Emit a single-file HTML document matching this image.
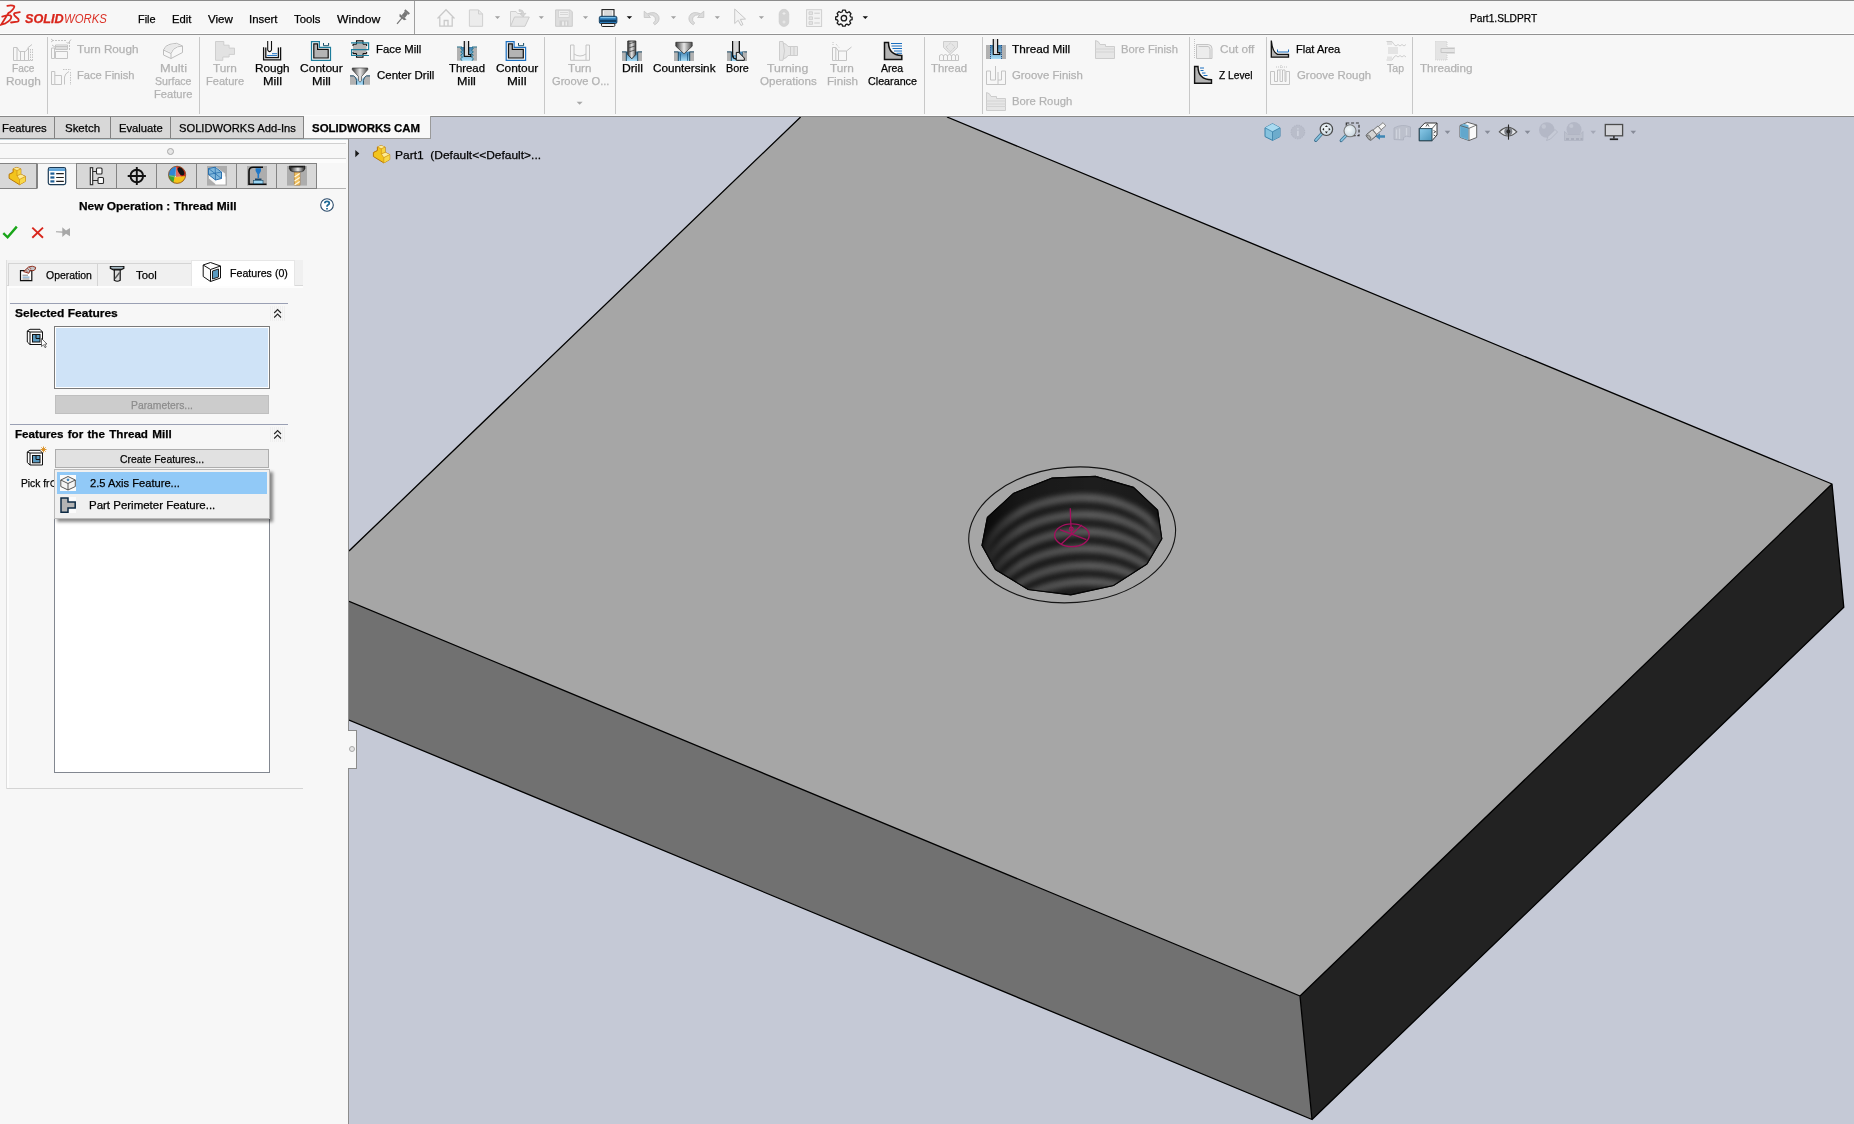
<!DOCTYPE html>
<html lang="en"><head><meta charset="utf-8"><title>SOLIDWORKS CAM - Part1.SLDPRT</title>
<style>
html,body{margin:0;padding:0;}
body{width:1854px;height:1124px;overflow:hidden;position:relative;background:#f7f7f7;font-family:"Liberation Sans",sans-serif;font-size:12px;}
.a{position:absolute;}
.t{position:absolute;white-space:pre;line-height:1;transform-origin:0 0;display:inline-block;-webkit-text-stroke:0.25px currentColor;}
svg{position:absolute;overflow:visible;}
#menubar{left:0;top:0;width:1854px;height:34px;background:#f7f7f7;border-top:1px solid #8c8c8c;box-sizing:border-box;}
#menuline{left:0;top:33px;width:1854px;height:1px;background:#929292;border-top:1px solid #fdfdfd;border-bottom:1px solid #fdfdfd;}
#menusep{left:414px;top:1px;width:1px;height:33px;background:#a0a0a0;}
#ribbon{left:0;top:35px;width:1854px;height:81px;background:#f7f7f7;}
.rsep{position:absolute;top:37px;width:1px;height:77px;background:#c8c8c8;}
#ribbonline{left:0;top:115px;width:1854px;height:1px;background:#888888;border-top:1px solid #fdfdfd;}
#tabrow{left:0;top:117px;width:304px;height:21px;background:#d8d8d8;border-bottom:1px solid #858585;}
.tab{position:absolute;top:117px;height:21px;border-right:1px solid #828282;box-sizing:border-box;}
#tabactive{left:304px;top:116px;width:127px;height:23px;background:#f8f8f8;box-sizing:border-box;border-right:1px solid #9a9a9a;border-bottom:1px solid #9a9a9a;}
#viewport{left:349px;top:117px;width:1505px;height:1007px;background:#c5c9d6;}
#vpleft{left:348px;top:139px;width:1px;height:985px;background:#8c8c8c;}
#panel{left:0;top:139px;width:348px;height:985px;background:#f7f7f7;}
.hl{position:absolute;height:1px;background:#d0d0d0;}
.itab{position:absolute;top:163px;height:26px;box-sizing:border-box;border:1px solid #838383;background:#d8d8d8;}
.itab.act{background:#f7f7f7;border-bottom-color:#f7f7f7;top:163px;height:26px;border-color:#b4b4b4 #838383 #f7f7f7 #838383;}
.stab{position:absolute;top:263px;height:23px;box-sizing:border-box;border:1px solid #d4d4d4;border-bottom:none;background:#f0f0f0;}
.stab.act{top:260px;height:26px;background:#ffffff;border-color:#e6e6e6;}
.secline{height:1px;background:#9aa0b4;}
.chevbg{width:15px;height:15px;background:repeating-linear-gradient(90deg,#efefef 0 1px,#f7f7f7 1px 2px);}

</style></head>
<body>
<div class="a" id="menubar"></div>
<div class="a" id="menuline"></div>
<div class="a" id="menusep"></div>
<div class="a" id="ribbon"></div>
<div class="rsep" style="left:47px"></div><div class="rsep" style="left:199px"></div>
<div class="rsep" style="left:544px"></div><div class="rsep" style="left:615px"></div>
<div class="rsep" style="left:924px"></div><div class="rsep" style="left:982px"></div>
<div class="rsep" style="left:1189px"></div><div class="rsep" style="left:1266px"></div>
<div class="rsep" style="left:1412px"></div>
<div class="a" id="viewport"></div>
<div class="a" id="ribbonline"></div>
<div class="a" id="panel"></div>
<div class="a" id="tabrow"></div>
<div class="tab" style="left:0;width:55px"></div><div class="tab" style="left:55px;width:56px"></div>
<div class="tab" style="left:111px;width:60px"></div><div class="tab" style="left:171px;width:133px"></div>
<div class="a" id="tabactive"></div>
<div class="a" id="vpleft"></div>
<!-- panel header lines -->
<div class="a" style="left:0;top:139px;width:348px;height:4px;background:#fcfcfc"></div><div class="a" style="left:0;top:139px;width:348px;height:1px;background:#c4d4da"></div><div class="a" style="left:0;top:159px;width:346px;height:4px;background:#fcfcfc"></div>
<div class="hl" style="left:0;top:143px;width:346px"></div>
<div class="hl" style="left:0;top:158px;width:346px"></div>
<div class="a" style="left:167px;top:148px;width:5px;height:5px;border:1px solid #a8a8a8;border-radius:50%;background:#e6e6e6"></div>
<!-- icon tab strip -->
<div class="a" style="left:0;top:188px;width:346px;height:1px;background:#b4b4b4"></div>
<div class="itab" style="left:-1px;width:38px"></div>
<div class="itab act" style="left:37px;width:40px"></div>
<div class="itab" style="left:76px;width:41px"></div>
<div class="itab" style="left:116px;width:41px"></div>
<div class="itab" style="left:156px;width:41px"></div>
<div class="itab" style="left:196px;width:41px"></div>
<div class="itab" style="left:236px;width:41px"></div>
<div class="itab" style="left:276px;width:41px"></div>
<!-- sub tabs -->
<div class="a" style="left:7px;top:260px;width:296px;height:26px;background:#f0f0f0"></div>
<div class="a" style="left:6px;top:260px;width:1px;height:529px;background:#dedede"></div>
<div class="a" style="left:7px;top:286px;width:2px;height:502px;background:#fdfdfd"></div>
<div class="a" style="left:7px;top:286px;width:296px;height:2px;background:#fdfdfd"></div>
<div class="a" style="left:7px;top:285px;width:296px;height:1px;background:#d9d9d9"></div>
<div class="stab" style="left:8px;width:90px"></div>
<div class="stab" style="left:97px;width:95px"></div>
<div class="stab act" style="left:191px;width:104px"></div>
<div class="a" style="left:295px;top:260px;width:8px;height:25px;background:#f0f0f0"></div>
<!-- Selected features -->
<div class="a secline" style="left:10px;top:303px;width:278px"></div>
<div class="a chevbg" style="left:270px;top:306px"></div>
<div class="a" style="left:54px;top:326px;width:216px;height:63px;box-sizing:border-box;border:1px solid #7a7a7a;background:#fff;"><div style="position:absolute;left:1px;top:1px;right:1px;bottom:1px;background:#cfe3f7"></div></div>
<div class="a" style="left:55px;top:395px;width:214px;height:19px;background:#cccccc;box-sizing:border-box;border:1px solid #bfbfbf"></div>
<!-- Features for the thread mill -->
<div class="a secline" style="left:10px;top:424px;width:278px"></div>
<div class="a chevbg" style="left:270px;top:427px"></div>
<div class="a" style="left:55px;top:449px;width:214px;height:19px;background:#e1e1e1;box-sizing:border-box;border:1px solid #adadad"></div>
<div class="a" style="left:54px;top:490px;width:216px;height:283px;box-sizing:border-box;border:1px solid #828790;background:#fff"></div>
<div class="a" id="popup" style="left:54px;top:469px;width:216px;height:50px;box-sizing:border-box;border:1px solid #b9b9b9;background:#f0f0f0;box-shadow:3px 3px 3px rgba(0,0,0,0.45)"></div>
<div class="a" style="left:57px;top:472px;width:210px;height:22px;background:#91c9f7"></div>
<div class="a" style="left:60px;top:475px;width:16px;height:16px;background:#fbfbfb"></div>
<div class="a" style="left:60px;top:497px;width:16px;height:16px;background:#fbfbfb"></div>
<div class="a" style="left:7px;top:788px;width:296px;height:1px;background:#d4d4d4"></div>
<!-- splitter handle -->
<div class="a" style="left:348px;top:730px;width:9px;height:39px;box-sizing:border-box;background:#f7f7f7;border:1px solid #8c8c8c;border-left:none"></div>
<div class="a" style="left:349px;top:746px;width:4px;height:4px;border:1px solid #a8a8a8;border-radius:50%;background:#e6e6e6"></div>

<svg id="model" class="a" style="left:0;top:0" width="1854" height="1124" viewBox="0 0 1854 1124">
<defs>
<clipPath id="vpclip"><rect x="349" y="117" width="1505" height="1007"/></clipPath>
<clipPath id="holeclip"><polygon points="1052.1,478 1095.5,476.3 1133.5,487.4 1157.6,510.1 1161.8,538.8 1146.9,564.1 1113.5,585.5 1070.8,594.8 1028.1,589.5 995.4,569.5 982,545.4 987.4,517.4 1013.4,493.4"/></clipPath>
<filter id="blur2" x="-20%" y="-20%" width="140%" height="140%"><feGaussianBlur stdDeviation="2.4"/></filter>
<linearGradient id="holeshade" x1="0" y1="0" x2="1" y2="0"><stop offset="0" stop-color="#000" stop-opacity="0.7"/><stop offset="0.22" stop-color="#000" stop-opacity="0.2"/><stop offset="0.6" stop-color="#000" stop-opacity="0"/><stop offset="0.92" stop-color="#000" stop-opacity="0.1"/><stop offset="1" stop-color="#000" stop-opacity="0.5"/></linearGradient>
</defs>
<g clip-path="url(#vpclip)" stroke="#000" stroke-width="1.3" stroke-linejoin="round">
<polygon points="800.4,117 947,117 1832,484 1300,996 349,601.3 349,551" fill="#a6a6a6" stroke="none"/>
<polygon points="349,601.3 1300,996 1312,1119.5 349,720" fill="#717171" stroke="none"/>
<polygon points="1300,996 1832,484 1843.8,607.3 1312,1119.5" fill="#222222" stroke="none"/>
<path d="M800.6,117 L349,551 M947,117 L1832,484 L1300,996 L349,601.3 M1832,484 L1843.8,607.3 L1312,1119.5 L349,720 M1300,996 L1312,1119.5" fill="none"/>
</g>
<!-- threaded hole -->
<ellipse cx="1072.15" cy="534.85" rx="103.6" ry="67.7" transform="rotate(-4.25 1072.15 534.85)" fill="none" stroke="#141414" stroke-width="1.1"/>
<polygon points="1052.1,478 1095.5,476.3 1133.5,487.4 1157.6,510.1 1161.8,538.8 1146.9,564.1 1113.5,585.5 1070.8,594.8 1028.1,589.5 995.4,569.5 982,545.4 987.4,517.4 1013.4,493.4" fill="#1d1d1d" stroke="#000" stroke-width="1"/>
<g clip-path="url(#holeclip)">
<g filter="url(#blur2)" fill="none" stroke="#5c5c5c" stroke-width="8">
<ellipse cx="1074" cy="559" rx="92" ry="61" transform="rotate(-6 1074 559)"/>
<ellipse cx="1075" cy="576" rx="92" ry="61" transform="rotate(-6 1075 576)"/>
<ellipse cx="1076" cy="593" rx="92" ry="61" transform="rotate(-6 1076 593)"/>
<ellipse cx="1077" cy="610" rx="92" ry="61" transform="rotate(-6 1077 610)"/>
<ellipse cx="1078" cy="627" rx="92" ry="61" transform="rotate(-6 1078 627)"/>
<ellipse cx="1079" cy="643" rx="92" ry="61" transform="rotate(-6 1079 643)"/>
</g>
<rect x="980" y="470" width="184" height="130" fill="url(#holeshade)"/>
</g>
<polygon points="1052.1,478 1095.5,476.3 1133.5,487.4 1157.6,510.1 1161.8,538.8 1146.9,564.1 1113.5,585.5 1070.8,594.8 1028.1,589.5 995.4,569.5 982,545.4 987.4,517.4 1013.4,493.4" fill="none" stroke="#050505" stroke-width="1.2"/>
<!-- origin marker -->
<g fill="none" stroke="#a3105e" stroke-width="1.3">
<ellipse cx="1071.9" cy="535.3" rx="17.3" ry="11.4"/>
<path d="M1070.3,508.2 L1070.6,520 L1071.6,535 M1059.8,529.6 L1086.4,539.6 M1081.8,524.9 L1061,544.2"/>
<circle cx="1071.3" cy="529" r="1.8"/>
</g>
</svg>

<svg id="icons" class="a" style="left:0;top:0" width="1854" height="1124" viewBox="0 0 1854 1124">
<defs>
<linearGradient id="silver" x1="0" y1="0" x2="1" y2="0"><stop offset="0" stop-color="#5a5a5a"/><stop offset="0.45" stop-color="#f2f2f2"/><stop offset="1" stop-color="#6a6a6a"/></linearGradient>
<linearGradient id="silver2" x1="0" y1="0" x2="1" y2="0"><stop offset="0" stop-color="#3c3c3c"/><stop offset="0.5" stop-color="#e8e8e8"/><stop offset="1" stop-color="#4a4a4a"/></linearGradient>
<linearGradient id="bluev" x1="0" y1="0" x2="0" y2="1"><stop offset="0" stop-color="#3c7fb0"/><stop offset="1" stop-color="#a9ddf6"/></linearGradient>
<g id="blocks"><!-- two grey blocks with blue pocket, local 0..20 x, 10.6..20 y -->
<rect x="4" y="10.6" width="12" height="9.4" fill="url(#bluev)"/>
<rect x="0" y="10.6" width="4.3" height="9.4" fill="#b2b2b2"/><rect x="15.7" y="10.6" width="4.3" height="9.4" fill="#b2b2b2"/>
<path d="M0,10.9 H4.3 V20 M20,10.9 H15.7 V20" fill="none" stroke="#1c4a66" stroke-width="1"/>
</g>
</defs>
<!-- ===== disabled ribbon icons ===== -->
<g fill="none" stroke="#c4c4c4" stroke-width="1">
<!-- Face Rough -->
<path d="M13.5,47.5 h3.5 v13 h-3.5 z M17,47.5 L19.5,51.5 H25.5 L28.5,48 V60.5 H17 M20.5,51.5 V60.5 M24.5,51.5 V60.5 M27.5,48 L32,44.5"/>
<path d="M30.5,49 V60.5 M32.5,49 V60.5 M28.5,60.5 H33" stroke-dasharray="1.5 1"/>
<!-- Turn Rough -->
<path d="M52,40.5 H67 M69.5,42 V51" stroke-dasharray="2 1"/>
<path d="M51,39 L53,40.5 L51,42 M66.5,42 L68,43.5 L71,39.5 M51.5,48 h3 v10.5 h-3 z M55.5,45 H67.5 V49.5 H55.5 z M55.5,46.5 H67.5 M55.5,48 H67.5 M55.5,51.5 H67.5 V58.5 H55.5 z M52,45 L55.5,47.5"/>
<!-- Face Finish -->
<path d="M51.5,71.5 h3.3 v13 h-3.3 z M54.8,75.5 H61.5 V84.5 H54.8 M64.5,84.5 V77 Q65,73.5 69,71.5"/>
<path d="M63,69.5 H71 M70.5,72 V85" stroke-dasharray="1.5 1"/>
<!-- Multi Surface Feature -->
<path d="M163.5,50 L171,53.5 V58.5 L163.5,55 z M163.5,50 Q165,45.5 170,44.3 L176.5,43.3 L182.5,46 V52.5 L171,58.5 M171,53.5 Q172.5,48.5 177.5,46.8 L182.5,46" stroke="#bdbdbd"/>
<path d="M164.5,49.5 Q166,46 170.2,45 L176.3,44 L181,46 L177.3,46.3 Q172.5,48 171,52.5 z" fill="#e9e9e9" stroke="none"/>
<!-- Turn Feature -->
<path d="M215.5,41.5 H223.8 V45.2 H229.1 V48.1 H234.5 V54.4 H229.1 V57 H222.8 V60.3 H215.5 z" fill="#e2e2e2" stroke="#cfcfcf"/>
<!-- Turn Groove -->
<path d="M570.5,45 H574 V54 Q580,58 586,54 V45 H589.5 V60.3 H570.5 z M574,54 V60 M586,54 V60" />
<!-- Turning Operations -->
<path d="M779.5,41.5 H783 Q786,51 783,60.3 H779.5 z M783,43 Q787,44 788,46.5 H797.5 V55.5 H788 Q787,58 783,59 M790.5,46.5 V55.5 M794,46.5 V55.5" fill="#e6e6e6" stroke="#cdcdcd"/>
<!-- Turn Finish -->
<path d="M832.5,47.5 h3.3 v13 h-3.3 z M835.8,47.5 L838.5,51 H846.5 V60.5 H835.8 M838.5,51 V60.5 M846.5,51 L851.5,47"/>
<path d="M833,42 V46 M836,44 L839,47.5" stroke-dasharray="1 1"/>
<!-- Thread -->
<path d="M943.5,41.5 H957.5 V47.5 L950.5,54 L943.5,47.5 z" fill="#e6e6e6" stroke="#cdcdcd"/>
<path d="M939.5,60.5 V55.5 Q941.5,53.5 943.5,55.5 Q945.5,53.5 947.5,55.5 Q949.5,53.5 951.5,55.5 Q953.5,53.5 955.5,55.5 Q957,53.5 958.5,55.5 V60.5 z M943.5,55.5 V60.5 M947.5,55.5 V60.5 M951.5,55.5 V60.5 M955.5,55.5 V60.5"/>
<path d="M946,47 L950.5,43 L955,47 L950.5,51.5 z" stroke-dasharray="1 1"/>
<!-- Groove Finish -->
<path d="M986.5,84.5 V71 H990.5 V80 H995.5 V66 M998,84.5 V72 M986.5,84.5 H1005.5 V71 H1001.5 V80 H998"/>
<!-- Bore Rough -->
<path d="M986.5,92.5 Q990,93 991,96.5 H996.5 V98.5 H1005.5 V110.5 H986.5 z" fill="#e6e6e6" stroke="#cdcdcd"/>
<path d="M986.5,101 H1005.5 M986.5,104 H1005.5 M986.5,106.5 H1005.5" stroke="#d4d4d4"/>
<!-- Bore Finish -->
<path d="M1095.5,40.5 Q1099,41 1100,44.5 H1105.500 V46.5 H1114.500 V58.5 H1095.5 z" fill="#e6e6e6" stroke="#cdcdcd"/>
<path d="M1095.5,49 H1114.5 M1095.5,52 H1114.5" stroke="#d4d4d4"/>
<!-- Cut off -->
<path d="M1194.5,39 V58" stroke-dasharray="1 1"/>
<path d="M1196.5,44.5 H1208.5 Q1212,45 1212,48.5 V58.5 H1196.5 z M1198.5,46.5 H1208 Q1210,47 1210,49.5 V58.5" fill="#ececec"/>
<!-- Groove Rough -->
<path d="M1270.500,84.5 V71.5 H1274.500 V81.5 H1277.500 V70 H1280 V81.5 H1282.500 V70 H1285 V81.500 H1286 V71.5 H1289.500 V84.5 z"/>
<path d="M1276,67 H1287 M1281,65 V70" stroke-dasharray="1 1"/>
<!-- Tap -->
<path d="M1386.500,41.500 H1392 L1394,44.5 L1396,46 L1398,44.5 L1400,46 L1402,44.5 L1404,46 L1406,44.5 M1386.500,60 H1392 L1394,57 L1396,55.500 L1398,57 L1400,55.500 L1402,57 L1404,55.500 L1406,57" stroke="#cfcfcf"/>
<path d="M1387,42 h5 v3 h-5 z M1387,56.5 h5 v3.500 h-5 z M1388,47 h10 v7 h-10z" fill="#e4e4e4" stroke="none"/>
<!-- Threading -->
<path d="M1435.500,41.500 H1447 V47.500 H1454.500 V53.500 H1447 V60 H1435.500 z" fill="#e4e4e4" stroke="#d0d0d0" stroke-dasharray="1 1"/>
<path d="M1441,48.500 H1454.500 M1441,52.500 H1454.500 M1441,48.500 V52.500" stroke="#c6c6c6"/>
</g>
<!-- ===== enabled ribbon icons ===== -->
<!-- Rough Mill -->
<g fill="none" stroke="#111" stroke-width="1.3">
<path d="M263.6,47.2 V59.9 H280.6 V47.2 M265.8,47.6 V57.7 H278.4 V47.6"/>
<path d="M267.7,41 V50 Q269.600,53.200 271.500,50 V41" stroke-width="1.100"/>
<path d="M272,53.700 H277.200 M267.200,55.600 H277.200" stroke="#1a6fc0" stroke-width="1"/>
</g>
<!-- Contour Mill (teal) -->
<g id="cm1">
<path d="M311.500,41.600 H319.400 V47.300 H330.500 V60.300 H311.500 z" fill="#f7f7f7" stroke="#1d7d9c" stroke-width="1.200"/>
<path d="M313.800,43.900 H317.600 V49.300 H328.200 V58 H313.800 z" fill="#b4b4b4" stroke="#111" stroke-width="1.200"/>
<path d="M323.500,43 V45.700 H328.600 V43" fill="none" stroke="#1a4f66" stroke-width="1"/>
</g>
<!-- Contour Mill (blue) -->
<g>
<path d="M506.200,41.600 H514.100 V47.300 H525.600 V60.300 H506.200 z" fill="#f7f7f7" stroke="#1a6fc0" stroke-width="1.200"/>
<path d="M508.500,43.900 H512.300 V49.300 H523.300 V58 H508.500 z" fill="#b4b4b4" stroke="#111" stroke-width="1.200"/>
<path d="M518.500,43 V45.700 H523.600 V43" fill="none" stroke="#1a4f66" stroke-width="1"/>
</g>
<!-- Face Mill -->
<g>
<path d="M356.500,40.600 H363 V44.300 H366.600 V53.600 H363 V57.200 H356.500 V53.600 H353 V44.300 H356.500 z" fill="#b4b4b4" stroke="none"/>
<path d="M356.500,44.300 V40.800 H363 V44.300 M356.500,53.600 V57.200 H363 V53.600 M353,44.300 h3.500 M363,44.300 h3.600 M353,53.600 h3.500 M363,53.600 h3.600 M353,46 v-1.700 M366.600,46 v-1.700 M353,52 v1.600 M366.600,52 v1.600" fill="none" stroke="#111" stroke-width="1.100"/>
<path d="M351,42.900 H368.600 V49.600 H351.600 V55.500 H369" fill="none" stroke="#1d7d9c" stroke-width="1.200"/>
</g>
<!-- Center Drill -->
<g>
<path d="M350,75.500 H353.500 Q356,76.500 356.500,80 V84.700 H350 z M370,75.500 H366.500 Q364,76.500 363.500,80 V84.700 H370 z" fill="#b2b2b2"/>
<path d="M353.500,75.500 Q356,76.500 356.500,80 V84.700 H363.500 V80 Q364,76.500 366.500,75.500 L362,79 H358 z" fill="#9fd4f2"/>
<path d="M350,75.900 H353.500 Q356.200,77 356.600,80.500 V84.700 M370,75.900 H366.500 Q363.800,77 363.400,80.500 V84.700" fill="none" stroke="#1c4a66" stroke-width="1"/>
<path d="M352.300,68 H367.700 V69.800 L361.600,76.500 V80.500 L360,82.300 L358.400,80.500 V76.500 L352.300,69.800 z" fill="url(#silver2)" stroke="#2a2a2a" stroke-width="0.600"/>
</g>
<!-- Thread Mill (large) -->
<g id="tmill">
<rect x="461" y="47" width="12" height="13.800" fill="url(#bluev)"/>
<path d="M457,46.800 H462 L460.600,48.500 L462.600,50.200 L460.600,51.900 L462.600,53.600 L460.600,55.300 L462.600,57 L460.600,58.700 L462,60.800 H457 z M477,46.800 H472 L473.400,48.500 L471.400,50.200 L473.400,51.900 L471.400,53.600 L473.400,55.300 L471.400,57 L473.400,58.700 L472,60.800 H477 z" fill="#b2b2b2"/>
<path d="M457,47 H462 L460.600,48.500 L462.600,50.200 L460.600,51.900 L462.600,53.600 L460.600,55.300 L462.600,57 L460.600,58.700 L462,60.800 M477,47 H472 L473.400,48.500 L471.400,50.200 L473.400,51.900 L471.400,53.600 L473.400,55.300 L471.400,57 L473.400,58.700 L472,60.800" fill="none" stroke="#1d6f8c" stroke-width="0.900"/>
<path d="M464.300,41 V56.300 H470.800 V54.500 H468.600 V41" fill="#dcdcdc" stroke="#111" stroke-width="1.200"/>
</g>
<!-- Drill -->
<g><use href="#blocks" x="622" y="41"/>
<path d="M627.800,41 H635.800 V54.500 L631.800,58.800 L627.800,54.500 z" fill="url(#silver2)" stroke="#222" stroke-width="0.900"/>
<path d="M628.500,44 L635,42 M628.500,48 L635,46 M628.500,52 L635,50" stroke="#444" stroke-width="0.800" fill="none"/>
</g>
<!-- Countersink -->
<g><use href="#blocks" x="674" y="41"/>
<path d="M680.300,53.500 V60.800 M687.600,53.500 V60.800" fill="none" stroke="#1c5a86" stroke-width="0.900"/>
<path d="M675.800,42.300 H692.200 V46.200 L684,53.800 L675.800,46.200 z" fill="url(#silver2)" stroke="#2a2a2a" stroke-width="0.700"/>
</g>
<!-- Bore -->
<g><use href="#blocks" x="727" y="41"/>
<rect x="742.800" y="51.600" width="1.500" height="9.200" fill="#b2b2b2"/>
<path d="M732.600,41 V55.500 Q733,58.500 736,59 M739.300,41 V52.500" fill="none" stroke="#111" stroke-width="1.200"/>
<rect x="733.200" y="41" width="5.600" height="14" fill="#d6d6d6"/>
<path d="M736.300,52.400 H738.800 L744.300,58 V60.300 H736.300 z" fill="#e4e4e4" stroke="#111" stroke-width="1"/>
<path d="M732.600,41 V55.500 Q733,58.500 736,59 M739.300,41 V52.500" fill="none" stroke="#111" stroke-width="1.200"/>
</g>
<!-- Area Clearance -->
<g>
<path d="M884.500,42.500 H888.500 Q888.500,55 901.800,55.500 V59.500 H884.500 z" fill="#b4b4b4" stroke="#111" stroke-width="1.500"/>
<path d="M891,43.500 H902 M891.500,46 H902 M892.500,48.500 H902 M894,51 H902 M896.500,53.300 H902" stroke="#1a6fc0" stroke-width="1" fill="none"/>
</g>
<!-- Thread Mill (small) -->
<g>
<rect x="990" y="45" width="12" height="14" fill="url(#bluev)"/>
<rect x="986" y="45" width="4.500" height="14" fill="#b2b2b2"/><rect x="1001.500" y="45" width="4.500" height="14" fill="#b2b2b2"/>
<path d="M990.500,45 V59 M1001.500,45 V59" stroke="#1d4f8c" stroke-width="1" stroke-dasharray="1.200 1" fill="none"/>
<path d="M993.300,39 V54.500 H999.800 V52.700 H997.600 V39" fill="#dcdcdc" stroke="#111" stroke-width="1.200"/>
</g>
<!-- Z Level -->
<g>
<path d="M1194.600,66.500 H1198 Q1198,79.500 1211.500,79.800 V83.200 H1194.600 z" fill="#b4b4b4" stroke="#111" stroke-width="1.400"/>
<path d="M1200,68 H1204 M1200.500,70.500 H1203.500 M1202,73 H1205.500 M1203.500,75.500 H1207.500" stroke="#1a6fc0" stroke-width="1" fill="none"/>
</g>
<!-- Flat Area -->
<g>
<path d="M1271.300,40.500 Q1272.500,52.500 1277.500,54.300 H1288.500 V57.200 H1271.300 z" fill="#b4b4b4" stroke="#111" stroke-width="1.300"/>
<path d="M1277.500,49.500 V52 H1288.500 V49.500" stroke="#1a6fc0" stroke-width="1" fill="none"/>
</g>

<!-- ===== DS logo ===== -->
<g fill="none" stroke="#d9261c" stroke-width="1.8" stroke-linecap="round" stroke-linejoin="round">
<path d="M7.300,5.800 Q12,4.600 14.300,6.300 Q14.800,8.200 9.600,12.500"/>
<path d="M8.600,12.800 L1.600,24 M2.300,16.600 Q9.500,13.800 11.200,16.200 Q12,19.500 5.500,23.300 L0.300,25"/>
<path d="M19.800,12.200 L14.500,13.200 Q13.300,14.200 15,16 L18.300,19 Q19.300,21 17.500,21.600 L11,22.500"/>
</g>
<!-- ===== quick access toolbar ===== -->
<g id="qat">
<!-- pin -->
<g transform="translate(402.5,17.400) rotate(40)" fill="#767676" stroke="none">
<rect x="-3" y="-8" width="6" height="2"/><rect x="-2" y="-6" width="4" height="5"/><path d="M-4.500,-1 H4.500 L3,1.200 H-3 z"/><rect x="-0.600" y="1" width="1.200" height="7.500"/>
</g>
<!-- home -->
<g fill="none" stroke="#cacaca" stroke-width="1.300">
<path d="M437.500,18.500 L446,9.800 L454.500,18.500 M439.800,17 V26.200 H452.200 V17 M444.200,26.200 V20.500 H448 V26.200"/>
</g>
<!-- new doc -->
<path d="M469.400,9.900 H478.500 L482.600,14 V26.300 H469.400 z" fill="#ececec" stroke="#d0d0d0" stroke-width="1"/>
<path d="M478.500,9.900 V14 H482.600" fill="none" stroke="#d0d0d0" stroke-width="1"/>
<!-- open -->
<path d="M510.500,26.300 V11.500 H516 L517.500,13.500 H523.500 V17" fill="#ececec" stroke="#d0d0d0" stroke-width="1"/>
<path d="M510.500,26.300 L514.500,17 H529.300 L525,26.300 z" fill="#e6e6e6" stroke="#cccccc" stroke-width="1"/>
<path d="M519,9.500 Q523.500,9.500 524,13.500 L526,13.300 L523,16.800 L520,13.800 L522,13.600 Q521.500,11.300 519,11.300 z" fill="#d4d4d4" stroke="#c6c6c6" stroke-width="0.600"/>
<!-- save -->
<path d="M555.600,9.900 H570.300 L572.300,11.900 V26.300 H555.600 z" fill="#dedede" stroke="#cccccc" stroke-width="1"/>
<rect x="558.600" y="10.400" width="10.500" height="7" fill="#efefef" stroke="#d0d0d0" stroke-width="0.700"/>
<path d="M560,12.500 H568 M560,14.500 H568" stroke="#d0d0d0" stroke-width="0.800"/>
<rect x="559.500" y="20.500" width="9" height="5.800" fill="#d0d0d0"/><rect x="562" y="21.500" width="2" height="4" fill="#ececec"/><rect x="565.500" y="21.500" width="1.500" height="4" fill="#ececec"/>
<!-- print -->
<rect x="602" y="9.600" width="12" height="8" fill="#f4f4f4" stroke="#222" stroke-width="1.100"/>
<rect x="604" y="11" width="8" height="5" fill="#d8d8d8"/>
<rect x="599.300" y="16.300" width="17.600" height="7.200" rx="1.500" fill="#2a7ab8" stroke="#123a5a" stroke-width="0.900"/>
<rect x="600" y="19.800" width="16.200" height="2.200" fill="#0f3f66"/>
<rect x="600.500" y="17" width="15" height="1.200" fill="#7fc0e8"/>
<path d="M601.500,23.500 H614.800 V25.600 Q614.800,26.500 613.500,26.500 H602.800 Q601.500,26.500 601.500,25.600 z" fill="#f0f0f0" stroke="#222" stroke-width="1"/>
<!-- undo -->
<path d="M644.200,11.200 V17.500 H650.500 L648.300,15.300 Q653,13.800 655.300,18 Q656.300,21 653.300,23 L654.800,24.800 Q660.300,21.500 658.800,16.500 Q656,10.300 647.200,13.800 z" fill="#dcdcdc" stroke="#c4c4c4" stroke-width="0.800"/>
<!-- redo -->
<path d="M703.800,11.200 V17.500 H697.500 L699.700,15.300 Q695,13.800 692.700,18 Q691.700,21 694.700,23 L693.200,24.800 Q687.700,21.500 689.200,16.500 Q692,10.300 700.800,13.800 z" fill="#dcdcdc" stroke="#c4c4c4" stroke-width="0.800"/>
<!-- cursor -->
<path d="M734.700,9 V23.500 L738.200,20.300 L741,25.500 L743,24.500 L740.300,19.400 L745.500,19 z" fill="#f3f3f3" stroke="#c8c8c8" stroke-width="1"/>
<!-- pill -->
<rect x="779.100" y="9.300" width="9.700" height="17.200" rx="4.850" fill="#d4d4d4" stroke="#cacaca" stroke-width="0.600"/>
<path d="M782.500,13.500 h3 M784,12 v3 M782.500,22 h3 M784,20.500 v3" stroke="#ececec" stroke-width="1"/>
<!-- options list -->
<rect x="806.600" y="9.700" width="15" height="16.800" fill="#f2f2f2" stroke="#d0d0d0" stroke-width="1"/>
<path d="M809,11.800 h3.500 v2.800 h-3.500z M809,16.800 h3.500 v2.800 h-3.500z M809,21.600 h3.500 v2.800 h-3.500z" fill="#e4e4e4" stroke="#cdcdcd" stroke-width="0.800"/>
<path d="M814.300,13.200 H819.800 M814.300,18.200 H819.800 M814.300,23 H819.800" stroke="#cdcdcd" stroke-width="1"/>
<!-- gear -->
<g transform="translate(844,17.800)" fill="none" stroke="#1a1a1a" stroke-width="1.300" stroke-linejoin="round">
<path d="M-1.400,-7.600 H1.400 L1.900,-5.600 L3.300,-5 L5.100,-6.100 L7,-4.100 L6,-2.300 L6.500,-0.900 L8.100,-0.600 V1.900 L6.300,2.400 L5.700,3.700 L6.700,5.400 L4.700,7.300 L3,6.300 L1.700,6.800 L1.300,8.400 H-1.400 L-1.900,6.700 L-3.300,6.100 L-5,7.100 L-6.900,5.200 L-5.900,3.500 L-6.500,2.200 L-8.300,1.700 V-0.900 L-6.500,-1.300 L-5.900,-2.700 L-6.900,-4.400 L-5,-6.300 L-3.300,-5.300 L-1.900,-5.800 z"/>
<circle cx="-0.100" cy="0.400" r="2.700"/>
</g>
<!-- dropdown arrows -->
<g fill="#a2a2a2"><path d="M494.900,16.200 h5.200 l-2.600,2.900z"/><path d="M538.700,16.200 h5.200 l-2.600,2.900z"/><path d="M582.900,16.200 h5.200 l-2.600,2.900z"/><path d="M670.900,16.200 h5.200 l-2.600,2.900z"/><path d="M714.700,16.200 h5.200 l-2.600,2.900z"/><path d="M758.800,16.200 h5.200 l-2.600,2.900z"/></g>
<g fill="#111"><path d="M626.700,16.200 h5.400 l-2.700,2.900z"/><path d="M862.600,16.200 h5.400 l-2.700,2.900z"/></g>
<path d="M576.600,101.800 h6 l-3,3z" fill="#a8a8a8"/>
</g>

<defs>
<g id="particon"><!-- yellow part, local box 0..18 x 0..18 -->
<path d="M0.600,7.300 L4.600,5.300 V1.800 L8.300,0.400 L12.300,1.900 V7.200 L16.900,9.400 V14.300 L11,17.700 L0.600,11.300 z" fill="#f3c41c" stroke="#b8780a" stroke-width="1" stroke-linejoin="round"/>
<path d="M4.600,1.800 L8.300,0.400 L12.300,1.900 L8.500,3.500 z" fill="#fdeb96"/>
<path d="M8.500,8.700 L12.300,7.200 L16.900,9.400 L11,12.400 z" fill="#fdeb96"/>
<path d="M8.500,3.500 L12.300,1.900 V7.200 L8.500,8.700 z" fill="#f7d33c"/>
<path d="M11,12.400 L16.900,9.400 V14.300 L11,17.700 z" fill="#f8d84a"/>
<path d="M4.600,1.800 L8.500,3.500 L12.300,1.900 M8.500,3.500 V8.700 L11,12.400 V17.700 M8.500,8.700 L12.300,7.200 M11,12.400 L16.900,9.400 M0.600,7.300 L4.600,5.300" fill="none" stroke="#c8860e" stroke-width="0.600"/>
</g>
<linearGradient id="toolhead" x1="0" y1="0" x2="1" y2="0"><stop offset="0" stop-color="#111"/><stop offset="0.55" stop-color="#e8e8e8"/><stop offset="1" stop-color="#222"/></linearGradient>
<linearGradient id="cubefront" x1="0" y1="0" x2="1" y2="1"><stop offset="0" stop-color="#8ccbea"/><stop offset="1" stop-color="#4a94b8"/></linearGradient>
<radialGradient id="lens" cx="0.4" cy="0.4" r="0.7"><stop offset="0" stop-color="#f4f8fa"/><stop offset="1" stop-color="#c4d2dc"/></radialGradient>
</defs>
<!-- ===== panel icon tabs ===== -->
<use href="#particon" x="8.500" y="167"/>
<!-- property manager -->
<g>
<rect x="48.300" y="167.700" width="17.400" height="16.900" rx="1.800" fill="#fdfdfd" stroke="#1b3a55" stroke-width="1.200"/>
<path d="M48.900,171 V169.500 Q48.900,168.300 50.100,168.300 H63.900 Q65.100,168.300 65.100,169.500 V171 z" fill="#62a8dd"/>
<rect x="50.400" y="172.500" width="4" height="2.200" fill="#1f5e94"/><rect x="50.400" y="176.400" width="4" height="2.200" fill="#1f5e94"/><rect x="50.400" y="180.300" width="4" height="2.200" fill="#1f5e94"/>
<path d="M56.200,173.600 H63.800 M56.200,177.500 H63.800 M56.200,181.400 H63.800" stroke="#222" stroke-width="1.100"/>
</g>
<!-- configuration manager -->
<g fill="#fafafa" stroke="#2a2a2a" stroke-width="1.100">
<rect x="90.300" y="167.700" width="2.400" height="17"/>
<path d="M92.700,171.500 H96.500 M92.700,180.500 H98" fill="none"/>
<rect x="96.500" y="168" width="5.500" height="6" rx="1"/><rect x="98" y="177.500" width="5.500" height="6" rx="1"/>
</g>
<!-- dimxpert crosshair -->
<g fill="none" stroke="#111" stroke-width="1.900"><circle cx="136.800" cy="176" r="6.300"/><path d="M127.700,176 H145.900 M136.800,167 V185"/></g>
<!-- appearance ball -->
<g>
<clipPath id="ballclip"><circle cx="177.100" cy="174.800" r="8.600"/></clipPath>
<g clip-path="url(#ballclip)">
<rect x="168" y="165" width="10" height="11" fill="#2f86d6"/><rect x="176" y="165" width="11" height="12" fill="#d8281e"/>
<rect x="168" y="175.500" width="7" height="10" fill="#3aa534"/><path d="M174.500,177 L186,176 V185 H173 z" fill="#f3c21a"/>
<path d="M176,166 L181,177 L174.500,177.500 L168,175.800 L168,175 L174.500,176 z" fill="#e8e8e8" opacity="0.350"/>
<ellipse cx="181" cy="171.300" rx="2.600" ry="4.600" transform="rotate(-32 181 171.300)" fill="#151515"/>
</g>
<circle cx="177.100" cy="174.800" r="8.600" fill="none" stroke="#8a4a1a" stroke-width="0.800"/>
</g>
<!-- CAM feature tree icon -->
<g>
<rect x="207" y="166" width="20" height="19.600" fill="#adadad"/>
<path d="M208.500,168.500 L216.500,167 L225.500,173.500 V184.500 H215.500 L208.500,178.500 z" fill="#f6f6f6" stroke="#9a9a9a" stroke-width="0.500"/>
<path d="M215.500,176.500 H225.500 V184.500 H215.500 z" fill="#ffffff"/>
<path d="M208.500,168.500 L215.200,167.200 L221.500,172 L221.500,178.500 L215.500,180 L208.500,174.500 z" fill="#7fb6da" stroke="#1d66a8" stroke-width="0.900"/>
<path d="M208.500,168.500 L221.500,178.500 M215.200,167.200 L215.500,180 M208.500,174.500 L221.500,172" stroke="#1d66a8" stroke-width="0.700" fill="none"/>
</g>
<!-- CAM operation icon -->
<g>
<rect x="247" y="166" width="20" height="19.600" fill="#adadad"/>
<path d="M263,167.300 H253 Q249,167.300 249,171.500 V184.300 H266.500" fill="none" stroke="#0c0c0c" stroke-width="1.600"/>
<path d="M255.600,168.200 H261 V171 L259.300,174 H257.300 L255.600,171 z" fill="#1f78c8"/><rect x="257.500" y="174" width="1.600" height="4" fill="#1f78c8"/>
<path d="M255,178.500 H261.500 V180.300 H255 z" fill="#1a4466"/>
<rect x="253.500" y="180.300" width="9.500" height="3.400" fill="#9ad6f4" stroke="#1c4a66" stroke-width="0.600"/>
</g>
<!-- CAM tool icon -->
<g>
<rect x="287" y="166" width="20" height="19.600" fill="#adadad"/>
<path d="M289.300,166 H305 V168.500 Q304.500,171.200 301.500,171.700 H292.800 Q289.800,171.200 289.300,168.500 z" fill="url(#toolhead)" stroke="#111" stroke-width="0.500"/>
<rect x="291" y="166" width="12.500" height="1.500" fill="#1a1a1a"/>
<rect x="294.200" y="172.500" width="5.800" height="12.600" fill="#f0c060" stroke="#9a6a2a" stroke-width="0.500"/>
<path d="M294.500,177 L299.800,173.500 M294.500,181 L299.800,177.500 M294.500,185 L299.800,181.500" stroke="#fff8e0" stroke-width="1.100" fill="none"/>
</g>
<!-- help -->
<g><circle cx="327" cy="205" r="6.300" fill="#fff" stroke="#2a4a6a" stroke-width="1.100"/>
<path d="M324.800,203.300 Q324.800,201.300 327,201.300 Q329.300,201.300 329.300,203.200 Q329.300,204.300 327.900,205 Q327,205.600 327,206.800 M327,208.100 V209.500" fill="none" stroke="#1f6a96" stroke-width="1.800"/></g>
<!-- OK / cancel / pin -->
<path d="M3.300,233.200 L7.600,237.300 L16.800,226.600" fill="none" stroke="#19a519" stroke-width="2.400"/>
<path d="M32.300,227.600 L43,237.700 M43,227.600 L32.300,237.700" fill="none" stroke="#d8261c" stroke-width="1.900"/>
<path d="M56,231.700 L63,232.100" stroke="#a4a4a4" stroke-width="1.100" fill="none"/>
<path d="M62.300,227.300 L66,230.500 L70,228 V236.300 L66,233.700 L62.300,237 z" fill="#a8a8a8"/>
<!-- sub-tab icons: Operation -->
<g>
<path d="M20.500,270.600 H31.800 V280.600 H20.500 z" fill="#fff" stroke="#111" stroke-width="1.200"/>
<path d="M22.500,275.200 H28 M22.500,279 H29.500" stroke="#666" stroke-width="0.800"/><path d="M22.500,277.100 H29.500" stroke="#3a7ab0" stroke-width="0.800"/>
<path d="M23.600,271.600 L28.500,267 Q32.500,265.300 35.600,267.300 Q36.200,269.800 33,270.800 L30.300,270.200 L28.800,273.300 z" fill="#c4c4c8" stroke="#8a1e0a" stroke-width="0.900"/>
<path d="M25.500,270 l2.500,2.500 M27.300,268.300 l2.500,2.500 M29.200,267 l2,2" stroke="#8a1e0a" stroke-width="0.600"/>
</g>
<!-- Tool -->
<g>
<path d="M110.300,266.500 H123.900 V268.300 L120.800,269.900 H113.400 L110.300,268.300 z" fill="#7f8a90" stroke="#111" stroke-width="1.100"/>
<path d="M111.500,267.300 H122.700" stroke="#b8d0dc" stroke-width="0.900"/>
<path d="M114.300,269.900 H120.200 V280.300 Q117.250,282.200 114.300,280.300 z" fill="#dcdcdc" stroke="#111" stroke-width="1.200"/>
<path d="M115,278.500 L119.600,272.500" stroke="#555" stroke-width="1.300"/>
</g>
<!-- Features(0) -->
<g fill="none" stroke="#111" stroke-width="1">
<path d="M203.200,265 L210.500,262.500 L220.500,266 V278 L210.500,281.500 L203.200,276.500 z" fill="#fdfdfd"/>
<path d="M203.200,265 L210.500,269.500 L220.500,266 M210.500,269.500 V281.500"/>
<path d="M212.500,271 L218.500,269 V277 L212.500,279 z" fill="#5a9ac0" stroke="#222"/>
</g>
<!-- chevrons -->
<g fill="none" stroke="#222" stroke-width="1.100">
<path d="M274.200,313 L277.600,309.600 L281,313 M274.200,317.500 L277.600,314.100 L281,317.500"/>
<path d="M274.200,434 L277.600,430.600 L281,434 M274.200,438.500 L277.600,435.100 L281,438.500"/>
</g>
<!-- selected features icon -->
<g fill="none" stroke="#111" stroke-width="1">
<path d="M27.300,331 L30,329.300 H40 L42.500,332 V344.500 H30 L27.300,342 z" fill="#fdfdfd"/>
<path d="M30,332 H42.500 M30,332 V344.500 M27.300,331 L30,332"/>
<rect x="32.500" y="334.500" width="7.500" height="7.500" fill="#5a9ac0" stroke="#111"/><path d="M36,334.500 V338.500 H40" stroke="#111"/>
<path d="M41.500,338.500 V346.500 L43.500,344.800 L45,347.700 L46.200,347 L44.700,344.200 L47,344 z" fill="#fff" stroke="#333" stroke-width="0.700"/>
</g>
<!-- create features icon -->
<g fill="none" stroke="#111" stroke-width="1">
<path d="M27.300,452 L30,450.300 H40 L42.500,453 V465 H30 L27.300,462.500 z" fill="#fdfdfd"/>
<path d="M30,453 H42.500 M30,453 V465 M27.300,452 L30,453"/>
<rect x="32.500" y="455.500" width="7.500" height="7.300" fill="#5a9ac0" stroke="#111"/><path d="M36,455.500 V459.500 H40" stroke="#111"/>
<path d="M43.500,446.500 V452.500 M40.500,449.500 H46.500 M41.400,447.400 L45.600,451.600 M45.600,447.400 L41.400,451.600" stroke="#d88a18" stroke-width="0.900"/>
</g>
<path d="M54,480.700 Q51,480.400 50.800,483.600 Q51,486.800 54,486.500" fill="none" stroke="#111" stroke-width="1.100"/>
<!-- popup item icons -->
<g fill="none" stroke="#444" stroke-width="0.900">
<path d="M60.800,480 L68,476.500 L75.300,480 V486.500 L68,490 L60.800,486.500 z" fill="#f4f4f4"/>
<path d="M60.800,480 L68,483.500 L75.300,480 M68,483.500 V490"/>
<circle cx="68" cy="479.800" r="0.900" fill="#2a7ab8" stroke="#2a7ab8"/>
</g>
<path d="M61,498 H68 V502 H75.200 V508 H68 V512.300 H61 z" fill="#b4b4b4" stroke="#0c2a44" stroke-width="1.500"/>
<!-- ===== feature tree in viewport ===== -->
<path d="M355.300,150 L359.300,153.600 L355.300,157.200 z" fill="#1a1a1a"/>
<use href="#particon" x="372.800" y="145.200"/>
<!-- ===== heads-up view toolbar ===== -->
<g>
<!-- cube -->
<path d="M1272.500,123.700 L1280,127.800 V136.600 L1272.500,140.400 L1265,136.600 V127.800 z" fill="#86c2de" stroke="#3a80a8" stroke-width="1"/>
<path d="M1272.500,123.700 L1280,127.800 L1272.500,131.800 L1265,127.800 z" fill="#a9daf0"/><path d="M1272.500,131.800 L1280,127.800 V136.600 L1272.500,140.400 z" fill="#6daccc"/>
<path d="M1265,127.800 L1272.500,131.800 L1280,127.800 M1272.500,131.800 V140.400" fill="none" stroke="#3a80a8" stroke-width="0.800"/>
<!-- info faded -->
<circle cx="1297.900" cy="132" r="6.800" fill="#b9bdca" stroke="#b0b4c2" stroke-width="1" stroke-dasharray="1.500 1"/>
<path d="M1297.900,128.300 v1.200 M1297.900,130.800 v5.200" stroke="#cfd3de" stroke-width="1.600"/>
<!-- zoom to fit -->
<path d="M1321.800,133.700 L1315.700,140.300" stroke="#3d6f8e" stroke-width="3.200" stroke-linecap="round"/><path d="M1321.800,133.700 L1315.900,140.100" stroke="#86c2de" stroke-width="1.800" stroke-linecap="round"/>
<circle cx="1326.400" cy="129.300" r="6.200" fill="url(#lens)" stroke="#4a4a4a" stroke-width="1.200"/>
<path d="M1326.400,125.200 l1.500,1.800 h-3z M1326.400,133.400 l1.500,-1.800 h-3z M1322.300,129.300 l1.800,-1.500 v3z M1330.500,129.300 l-1.800,-1.500 v3z" fill="#222"/>
<!-- zoom to area -->
<rect x="1346.300" y="123" width="12.700" height="12.700" fill="none" stroke="#333" stroke-width="1.200" stroke-dasharray="3 1.800"/>
<path d="M1346.500,135 L1341.200,140.500" stroke="#3d6f8e" stroke-width="3.200" stroke-linecap="round"/><path d="M1346.500,135 L1341.400,140.300" stroke="#86c2de" stroke-width="1.800" stroke-linecap="round"/>
<circle cx="1350" cy="130.800" r="6" fill="url(#lens)" stroke="#7a7a7a" stroke-width="1.100"/>
<!-- previous view -->
<g transform="translate(1376,131.300) rotate(-40)"><rect x="-10.500" y="-3.600" width="9" height="7.200" rx="1.500" fill="#d4d4d4" stroke="#555" stroke-width="0.900"/><rect x="-1.500" y="-2.800" width="6.500" height="5.600" fill="#ececec" stroke="#666" stroke-width="0.800"/><rect x="5" y="-2.100" width="6" height="4.200" fill="#f4f4f4" stroke="#777" stroke-width="0.800"/><ellipse cx="-9.300" cy="0" rx="1.500" ry="2.600" fill="#aaa" stroke="#555" stroke-width="0.600"/></g>
<path d="M1385,135.300 H1380 V133.300 L1375.500,136.500 L1380,139.700 V137.700 H1385 z" fill="#3f86b4"/>
<!-- section view faded -->
<path d="M1394,128 Q1402,123.500 1410.500,127 V137 Q1406,135 1403.500,137.500 V140 L1394,139.500 z" fill="#bcc0cc" stroke="#aeb2c0" stroke-width="0.900"/>
<path d="M1396.500,129.500 V138.500 M1399.500,128.500 V139 M1406.500,128 V135.500" stroke="#d0d4de" stroke-width="1.300"/>
<!-- view orientation -->
<path d="M1419.300,128.600 L1424.800,123 H1437 V135 L1432,140.700 H1419.300 z" fill="#fbfbfb" stroke="#333" stroke-width="1"/>
<rect x="1419.300" y="128.600" width="12.700" height="12.100" fill="url(#cubefront)" stroke="#2a4a5a" stroke-width="1"/>
<path d="M1432,128.600 L1437,123 M1426,126.500 l1.500,-2.500 l1.500,2.500 M1433.500,130.500 l2.300,1.200 l-2.300,1.300 M1433.500,135 l2,1" fill="none" stroke="#333" stroke-width="0.800"/>
<!-- display style -->
<path d="M1460,125.500 L1467.500,122.300 L1476.700,125 V137.500 L1469,140.500 L1460,137.300 z" fill="#fafafa" stroke="#555" stroke-width="0.900"/>
<path d="M1460,125.500 L1464,123.800 L1468.500,125.300 V140.300 L1460,137.300 z" fill="#6fb2d4"/>
<path d="M1460,125.500 L1469,128.300 L1476.700,125 M1469,128.300 V140.500" fill="none" stroke="#555" stroke-width="0.800"/>
<path d="M1461,127 L1468,129.200 V139 L1461,136.600 z" fill="#5aa0c6" opacity="0.600"/>
<!-- hide/show eye -->
<path d="M1499.300,131.800 Q1508,123 1516.800,131.800 Q1508,140 1499.300,131.800 z" fill="#e4e6ea" stroke="#555" stroke-width="1.100"/>
<circle cx="1508.300" cy="131.500" r="4" fill="#7c7f86"/><circle cx="1508.300" cy="131.500" r="1.900" fill="#2a2a2a"/>
<path d="M1508.500,124.500 V139.700" stroke="#2a2a2a" stroke-width="1.100"/>
<!-- edit appearance faded -->
<circle cx="1546.800" cy="130" r="7.800" fill="#b4b8c6"/><circle cx="1543.800" cy="126.500" r="2.200" fill="#c2c6d2"/>
<path d="M1546.500,140.500 L1548,136.500 L1555,129.500 L1557.500,132 L1550.500,139 z" fill="#c6cad6" stroke="#aeb2c0" stroke-width="0.800"/>
<!-- scene faded -->
<circle cx="1574" cy="129.500" r="7.500" fill="#b4b8c6"/><circle cx="1571.300" cy="126" r="2.100" fill="#c2c6d2"/>
<path d="M1564.500,131.500 L1568,134.500 H1580 L1583,131.500 V140.500 H1564.500 z" fill="#bcc0cc" stroke="#aeb2c0" stroke-width="0.700"/>
<path d="M1566,139 h3 M1571,139 h3 M1576,139 h3 M1580.500,139 h2" stroke="#a4a8b6" stroke-width="1.500"/>
<!-- monitor -->
<rect x="1605.300" y="124.500" width="17.300" height="11.300" fill="#d3d4d9" stroke="#4c4c4c" stroke-width="1.300"/>
<path d="M1613.900,136 V138.500" stroke="#333" stroke-width="1.600"/><rect x="1609.800" y="138.400" width="8.300" height="1.700" fill="#222"/>
<!-- arrows -->
<g fill="#878b98"><path d="M1444.700,130.800 h5.600 l-2.800,3.100z"/><path d="M1484.700,130.800 h5.600 l-2.800,3.100z"/><path d="M1524.700,130.800 h5.600 l-2.800,3.100z"/><path d="M1590.400,130.800 h5.600 l-2.800,3.100z" fill="#a4a8b6"/><path d="M1630.500,130.800 h5.600 l-2.800,3.100z"/></g>
</g>
</svg>

<div id="labels">
<span class="t" style="left:137.77px;top:14px;font-size:11.5px;color:#000000;transform:scaleX(0.9523);">File</span>
<span class="t" style="left:172.01px;top:14px;font-size:11.5px;color:#000000;transform:scaleX(0.9767);">Edit</span>
<span class="t" style="left:208.10px;top:14px;font-size:11.5px;color:#000000;transform:scaleX(1.0073);">View</span>
<span class="t" style="left:248.91px;top:14px;font-size:11.5px;color:#000000;transform:scaleX(0.9919);">Insert</span>
<span class="t" style="left:293.98px;top:14px;font-size:11.5px;color:#000000;transform:scaleX(0.9884);">Tools</span>
<span class="t" style="left:337.23px;top:14px;font-size:11.5px;color:#000000;transform:scaleX(1.0571);">Window</span>
<span class="t" style="left:1470.35px;top:13px;font-size:11.5px;color:#000000;transform:scaleX(0.8851);">Part1.SLDPRT</span>
<span class="t" style="left:12.04px;top:63px;font-size:11.5px;color:#b2b2b2;transform:scaleX(0.8785);">Face</span>
<span class="t" style="left:5.56px;top:76px;font-size:11.5px;color:#b2b2b2;transform:scaleX(1.0275);">Rough</span>
<span class="t" style="left:77.03px;top:44px;font-size:11.5px;color:#b2b2b2;transform:scaleX(1.0182);">Turn Rough</span>
<span class="t" style="left:76.88px;top:70px;font-size:11.5px;color:#b2b2b2;transform:scaleX(0.9682);">Face Finish</span>
<span class="t" style="left:159.87px;top:63px;font-size:11.5px;color:#b2b2b2;transform:scaleX(1.1112);">Multi</span>
<span class="t" style="left:154.58px;top:76px;font-size:11.5px;color:#b2b2b2;transform:scaleX(0.9211);">Surface</span>
<span class="t" style="left:153.58px;top:89px;font-size:11.5px;color:#b2b2b2;transform:scaleX(0.9698);">Feature</span>
<span class="t" style="left:213.30px;top:63px;font-size:11.5px;color:#b2b2b2;transform:scaleX(1.0264);">Turn</span>
<span class="t" style="left:206.34px;top:76px;font-size:11.5px;color:#b2b2b2;transform:scaleX(0.9622);">Feature</span>
<span class="t" style="left:254.94px;top:63px;font-size:11.5px;color:#000000;transform:scaleX(1.0199);">Rough</span>
<span class="t" style="left:262.57px;top:76px;font-size:11.5px;color:#000000;transform:scaleX(1.1012);">Mill</span>
<span class="t" style="left:300.40px;top:63px;font-size:11.5px;color:#000000;transform:scaleX(1.0459);">Contour</span>
<span class="t" style="left:311.75px;top:76px;font-size:11.5px;color:#000000;transform:scaleX(1.0939);">Mill</span>
<span class="t" style="left:376.00px;top:44px;font-size:11.5px;color:#000000;transform:scaleX(0.9852);">Face Mill</span>
<span class="t" style="left:376.50px;top:70px;font-size:11.5px;color:#000000;transform:scaleX(0.9963);">Center Drill</span>
<span class="t" style="left:449.47px;top:63px;font-size:11.5px;color:#000000;transform:scaleX(0.9883);">Thread</span>
<span class="t" style="left:456.85px;top:76px;font-size:11.5px;color:#000000;transform:scaleX(1.0938);">Mill</span>
<span class="t" style="left:495.70px;top:63px;font-size:11.5px;color:#000000;transform:scaleX(1.0337);">Contour</span>
<span class="t" style="left:506.98px;top:76px;font-size:11.5px;color:#000000;transform:scaleX(1.1351);">Mill</span>
<span class="t" style="left:568.30px;top:63px;font-size:11.5px;color:#b2b2b2;transform:scaleX(1.0071);">Turn</span>
<span class="t" style="left:551.94px;top:76px;font-size:11.5px;color:#b2b2b2;transform:scaleX(0.9659);">Groove O...</span>
<span class="t" style="left:622.02px;top:63px;font-size:11.5px;color:#000000;transform:scaleX(1.0597);">Drill</span>
<span class="t" style="left:653.40px;top:63px;font-size:11.5px;color:#000000;transform:scaleX(1.0183);">Countersink</span>
<span class="t" style="left:725.94px;top:63px;font-size:11.5px;color:#000000;transform:scaleX(0.9400);">Bore</span>
<span class="t" style="left:767.27px;top:63px;font-size:11.5px;color:#b2b2b2;transform:scaleX(1.0695);">Turning</span>
<span class="t" style="left:759.60px;top:76px;font-size:11.5px;color:#b2b2b2;transform:scaleX(1.0077);">Operations</span>
<span class="t" style="left:830.34px;top:63px;font-size:11.5px;color:#b2b2b2;transform:scaleX(1.0261);">Turn</span>
<span class="t" style="left:827.09px;top:76px;font-size:11.5px;color:#b2b2b2;transform:scaleX(1.0129);">Finish</span>
<span class="t" style="left:881.21px;top:63px;font-size:11.5px;color:#000000;transform:scaleX(0.9133);">Area</span>
<span class="t" style="left:868.01px;top:76px;font-size:11.5px;color:#000000;transform:scaleX(0.9341);">Clearance</span>
<span class="t" style="left:931.47px;top:63px;font-size:11.5px;color:#b2b2b2;transform:scaleX(0.9890);">Thread</span>
<span class="t" style="left:1012.48px;top:44px;font-size:11.5px;color:#000000;transform:scaleX(1.0220);">Thread Mill</span>
<span class="t" style="left:1012.10px;top:70px;font-size:11.5px;color:#b2b2b2;transform:scaleX(0.9881);">Groove Finish</span>
<span class="t" style="left:1012.30px;top:96px;font-size:11.5px;color:#b2b2b2;transform:scaleX(0.9809);">Bore Rough</span>
<span class="t" style="left:1121.06px;top:44px;font-size:11.5px;color:#b2b2b2;transform:scaleX(0.9780);">Bore Finish</span>
<span class="t" style="left:1219.90px;top:44px;font-size:11.5px;color:#b2b2b2;transform:scaleX(1.0210);">Cut off</span>
<span class="t" style="left:1218.99px;top:70px;font-size:11.5px;color:#000000;transform:scaleX(0.8861);">Z Level</span>
<span class="t" style="left:1295.60px;top:44px;font-size:11.5px;color:#000000;transform:scaleX(0.9618);">Flat Area</span>
<span class="t" style="left:1296.70px;top:70px;font-size:11.5px;color:#b2b2b2;transform:scaleX(0.9907);">Groove Rough</span>
<span class="t" style="left:1387.40px;top:63px;font-size:11.5px;color:#b2b2b2;transform:scaleX(0.9166);">Tap</span>
<span class="t" style="left:1419.50px;top:63px;font-size:11.5px;color:#b2b2b2;transform:scaleX(1.0116);">Threading</span>
<span class="t" style="left:2.44px;top:123px;font-size:11.5px;color:#000000;transform:scaleX(0.9864);">Features</span>
<span class="t" style="left:65.41px;top:123px;font-size:11.5px;color:#000000;transform:scaleX(0.9966);">Sketch</span>
<span class="t" style="left:119.40px;top:123px;font-size:11.5px;color:#000000;transform:scaleX(0.9762);">Evaluate</span>
<span class="t" style="left:179.20px;top:123px;font-size:11.5px;color:#000000;transform:scaleX(0.9721);">SOLIDWORKS Add-Ins</span>
<span class="t" style="left:312.30px;top:123px;font-size:11.5px;color:#000000;font-weight:bold;transform:scaleX(0.9946);">SOLIDWORKS CAM</span>
<span class="t" style="left:394.83px;top:150px;font-size:11.5px;color:#000000;transform:scaleX(1.0409);">Part1  (Default&lt;&lt;Default&gt;...</span>
<span class="t" style="left:79.37px;top:201px;font-size:11.5px;color:#000000;font-weight:bold;transform:scaleX(1.0358);">New Operation : Thread Mill</span>
<span class="t" style="left:45.52px;top:270px;font-size:11.5px;color:#000000;transform:scaleX(0.9094);">Operation</span>
<span class="t" style="left:136.07px;top:270px;font-size:11.5px;color:#000000;transform:scaleX(0.9865);">Tool</span>
<span class="t" style="left:229.98px;top:268px;font-size:11.5px;color:#000000;transform:scaleX(0.9241);">Features (0)</span>
<span class="t" style="left:15.37px;top:308px;font-size:11.5px;color:#000000;font-weight:bold;transform:scaleX(1.0438);">Selected Features</span>
<span class="t" style="left:130.55px;top:400px;font-size:11.5px;color:#8c8c8c;transform:scaleX(0.8979);">Parameters...</span>
<span class="t" style="left:15.17px;top:429px;font-size:11.5px;color:#000000;font-weight:bold;word-spacing:1px;transform:scaleX(1.0117);">Features for the Thread Mill</span>
<span class="t" style="left:119.60px;top:454px;font-size:11.5px;color:#000000;transform:scaleX(0.9073);">Create Features...</span>
<span class="t" style="left:21.47px;top:478px;font-size:11.5px;color:#000000;transform:scaleX(0.8908);">Pick fr</span>
<span class="t" style="left:89.50px;top:478px;font-size:11.5px;color:#000000;transform:scaleX(0.9699);">2.5 Axis Feature...</span>
<span class="t" style="left:89.00px;top:500px;font-size:11.5px;color:#000000;transform:scaleX(0.9980);">Part Perimeter Feature...</span>
<span class="t" style="left:25.20px;top:13px;font-size:12.5px;color:#d9261c;font-weight:bold;font-style:italic;transform:scaleX(1.0104);">SOLID</span>
<span class="t" style="left:64.19px;top:13px;font-size:12.5px;color:#db3228;font-style:italic;-webkit-text-stroke-width:0;transform:scaleX(0.9075);">WORKS</span>
</div>
</body></html>
